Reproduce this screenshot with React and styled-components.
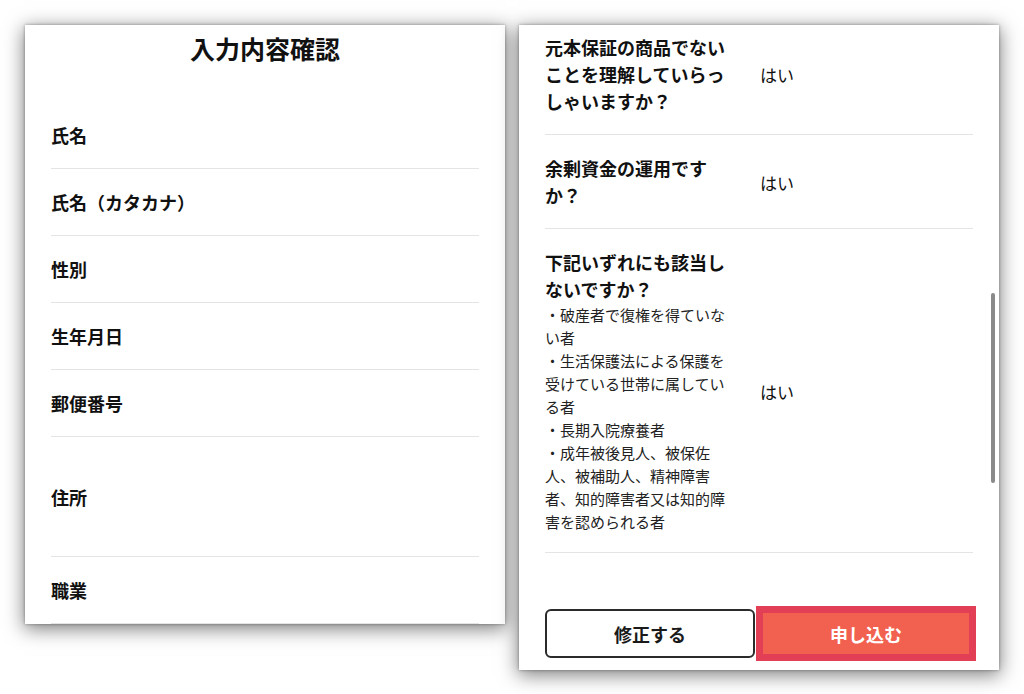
import React from 'react';
import styled, { createGlobalStyle } from 'styled-components';

const Global = createGlobalStyle`
  html, body { margin: 0; padding: 0; background: #fff; }
  body {
    font-family: "Noto Sans CJK JP", "Noto Sans", sans-serif;
    color: #111;
  }
`;

const Page = styled.div`
  display: flex;
  align-items: flex-start;
  gap: 14px;
  padding: 25px 0 0 25px;
  width: 1024px;
  height: 694px;
  box-sizing: border-box;
  overflow: hidden;
`;

const Panel = styled.section`
  position: relative;
  width: 480px;
  height: ${(p) => p.$h}px;
  background: #fff;
  box-shadow: 0 4px 18px 1px rgba(0, 0, 0, 0.5), 0 0 3px rgba(0, 0, 0, 0.35);
  overflow: hidden;
  display: flex;
  flex-direction: column;
  box-sizing: border-box;
  padding: ${(p) => p.$pad || '0'};
`;

const Title = styled.h1`
  margin: 7px 0 38px;
  text-align: center;
  font-size: 25px;
  line-height: 32px;
  font-weight: 700;
  color: #111;
`;

const FieldRow = styled.div`
  display: flex;
  align-items: center;
  height: ${(p) => (p.$tall ? 119 : 66)}px;
  flex-shrink: 0;
  border-bottom: 1px solid #e4e4e4;
  font-size: 18px;
  font-weight: 700;
  color: #111;
`;

const ScrollArea = styled.div`
  flex: 1;
  overflow: hidden;
  padding: 0 26px;
`;

const List = styled.div`
  margin-top: -11px;
`;

const QRow = styled.div`
  display: grid;
  grid-template-columns: 186px 1fr;
  column-gap: 29px;
  align-items: center;
  padding: 20px 0 19px;
  border-bottom: 1px solid #e4e4e4;
`;

const QText = styled.div`
  font-size: 18px;
  font-weight: 700;
  line-height: 27px;
  color: #111;
`;

const Note = styled.div`
  font-size: 15px;
  font-weight: 400;
  line-height: 23px;
  color: #222;
`;

const Answer = styled.div`
  font-size: 17px;
  font-weight: 400;
  color: #111;
`;

const Footer = styled.div`
  display: flex;
  align-items: center;
  gap: 1px;
  padding: 0 23px 9px 26px;
`;

const EditButton = styled.button`
  width: 210px;
  height: 49px;
  box-sizing: border-box;
  border: 2px solid #2b2b2b;
  border-radius: 6px;
  background: #fff;
  font-family: inherit;
  font-size: 18px;
  font-weight: 700;
  color: #1a1a1a;
  cursor: pointer;
`;

const SubmitButton = styled.button`
  width: 220px;
  height: 55px;
  box-sizing: border-box;
  border: 7px solid #e23f57;
  border-radius: 0;
  background: #f2604f;
  font-family: inherit;
  font-size: 18px;
  font-weight: 700;
  color: #fff;
  cursor: pointer;
`;

const ScrollThumb = styled.div`
  position: absolute;
  right: 4px;
  top: 268px;
  width: 4px;
  height: 190px;
  border-radius: 2px;
  background: #8a8a8a;
`;

const fields = [
  { label: '氏名' },
  { label: '氏名（カタカナ）' },
  { label: '性別' },
  { label: '生年月日' },
  { label: '郵便番号' },
  { label: '住所', tall: true },
  { label: '職業' },
];

const questions = [
  { q: '元本保証の商品でないことを理解していらっしゃいますか？', a: 'はい' },
  { q: '余剰資金の運用ですか？', a: 'はい' },
  {
    q: '下記いずれにも該当しないですか？',
    notes: [
      '・破産者で復権を得ていない者',
      '・生活保護法による保護を受けている世帯に属している者',
      '・長期入院療養者',
      '・成年被後見人、被保佐人、被補助人、精神障害者、知的障害者又は知的障害を認められる者',
    ],
    a: 'はい',
  },
];

export default function App() {
  return (
    <>
      <Global />
      <Page>
        <Panel $h={599} $pad="0 26px">
          <Title>入力内容確認</Title>
          {fields.map((f) => (
            <FieldRow key={f.label} $tall={f.tall}>
              {f.label}
            </FieldRow>
          ))}
        </Panel>
        <Panel $h={645}>
          <ScrollArea>
            <List>
              {questions.map((item) => (
                <QRow key={item.q}>
                  <div>
                    <QText>{item.q}</QText>
                    {item.notes && (
                      <Note>
                        {item.notes.map((n) => (
                          <div key={n}>{n}</div>
                        ))}
                      </Note>
                    )}
                  </div>
                  <Answer>{item.a}</Answer>
                </QRow>
              ))}
            </List>
          </ScrollArea>
          <Footer>
            <EditButton>修正する</EditButton>
            <SubmitButton>申し込む</SubmitButton>
          </Footer>
          <ScrollThumb />
        </Panel>
      </Page>
    </>
  );
}
